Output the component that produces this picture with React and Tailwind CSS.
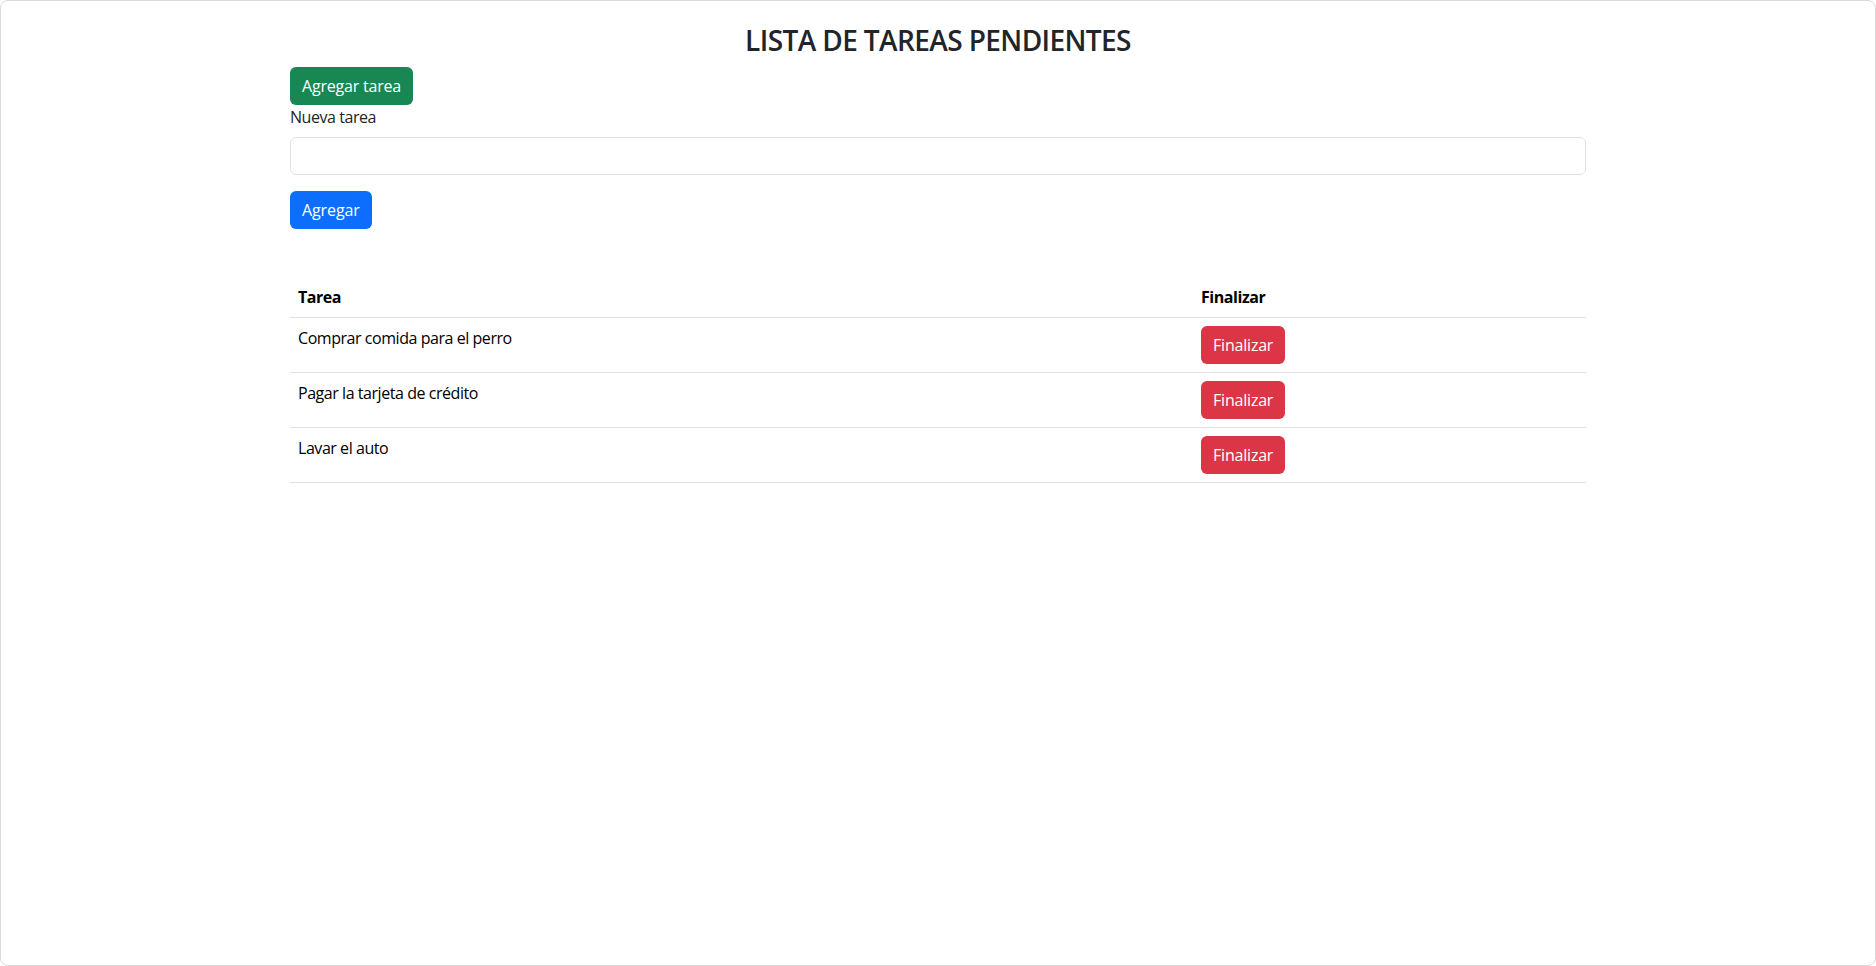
import { useState } from 'react';

const initialTasks = [
  { id: 1, text: 'Comprar comida para el perro' },
  { id: 2, text: 'Pagar la tarjeta de crédito' },
  { id: 3, text: 'Lavar el auto' },
];

export default function App() {
  const [tasks, setTasks] = useState(initialTasks);
  const [newTask, setNewTask] = useState('');
  const [showForm, setShowForm] = useState(true);

  const handleAdd = () => {
    if (!newTask.trim()) return;
    setTasks([...tasks, { id: Date.now(), text: newTask.trim() }]);
    setNewTask('');
  };

  const handleFinish = (id) => {
    setTasks(tasks.filter((t) => t.id !== id));
  };

  return (
    <div className="h-screen w-full bg-white border border-[#dadada] rounded-[8px] overflow-hidden font-['Open_Sans','Noto_Sans',sans-serif] text-[16px] tracking-[-0.45px] text-[#212529]">
      <div className="mx-auto w-[1296px] pt-[22px]">
        <h3 className="text-center text-[28px] leading-[34px] font-semibold tracking-[-0.6px] mb-[10px]">
          LISTA DE TAREAS PENDIENTES
        </h3>

        <button
          type="button"
          onClick={() => setShowForm(!showForm)}
          className="h-[38px] px-3 rounded-[6px] bg-[#198754] text-white leading-6 tracking-[-0.2px] block"
        >
          Agregar tarea
        </button>

        {showForm && (
          <div>
            <label className="block leading-6 mb-2">Nueva tarea</label>
            <input
              type="text"
              value={newTask}
              onChange={(e) => setNewTask(e.target.value)}
              className="block w-full h-[38px] px-3 border border-[#dee2e6] rounded-[6px] outline-none mb-4"
            />
            <button
              type="button"
              onClick={handleAdd}
              className="h-[38px] px-3 rounded-[6px] bg-[#0d6efd] text-white leading-6 tracking-[-0.1px] block"
            >
              Agregar
            </button>
          </div>
        )}

        {/* Task table */}
        <table className="w-full mt-12 border-collapse text-black">
          <thead>
            <tr className="border-b border-[#dee2e6]">
              <th className="w-[903px] text-left font-bold px-2 py-2 leading-6">Tarea</th>
              <th className="text-left font-bold px-2 py-2 leading-6">Finalizar</th>
            </tr>
          </thead>
          <tbody>
            {tasks.map((task) => (
              <tr key={task.id} className="border-b border-[#dee2e6]">
                <td className="px-2 py-2 leading-6 align-top">{task.text}</td>
                <td className="px-2 py-2 align-top">
                  <button
                    type="button"
                    onClick={() => handleFinish(task.id)}
                    className="h-[38px] px-3 rounded-[6px] bg-[#dc3545] text-white leading-6 tracking-[-0.2px] block"
                  >
                    Finalizar
                  </button>
                </td>
              </tr>
            ))}
          </tbody>
        </table>
      </div>
    </div>
  );
}
